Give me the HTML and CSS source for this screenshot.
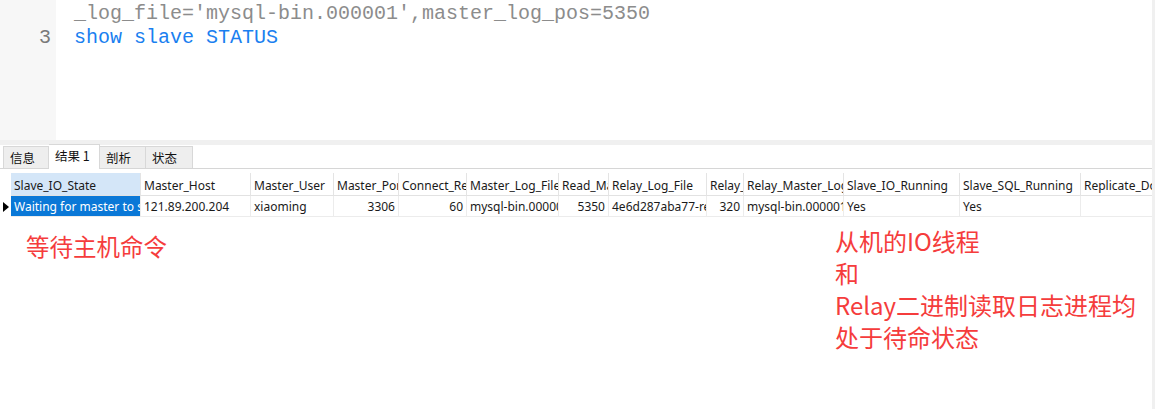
FILE: index.html
```html
<!DOCTYPE html>
<html lang="zh">
<head>
<meta charset="utf-8">
<title>show slave STATUS</title>
<link rel="stylesheet" href="styles.css">
</head>
<body>
<div class="page">
  <div class="main">
    <div class="editor">
      <div class="gutter">
        <div class="ln"></div>
        <div class="ln">3</div>
      </div>
      <div class="code">
        <div class="line gray">_log_file='mysql-bin.000001',master_log_pos=5350</div>
        <div class="line blue">show slave STATUS</div>
      </div>
    </div>
    <div class="band"></div>
    <div class="tabs">
      <div class="tab">信息</div>
      <div class="tab active">结果 1</div>
      <div class="tab">剖析</div>
      <div class="tab">状态</div>
    </div>
    <div class="grid">
      <div class="ind"></div>
      <div class="hc sel">Slave_IO_State</div>
      <div class="hc">Master_Host</div>
      <div class="hc">Master_User</div>
      <div class="hc">Master_Port</div>
      <div class="hc">Connect_Retry</div>
      <div class="hc">Master_Log_File</div>
      <div class="hc">Read_Master_Log_Pos</div>
      <div class="hc">Relay_Log_File</div>
      <div class="hc">Relay_Log_Pos</div>
      <div class="hc">Relay_Master_Log_File</div>
      <div class="hc">Slave_IO_Running</div>
      <div class="hc">Slave_SQL_Running</div>
      <div class="hc">Replicate_Do_DB</div>

      <div class="ind"><span class="tri"></span></div>
      <div class="dc cur">Waiting for master to send event</div>
      <div class="dc">121.89.200.204</div>
      <div class="dc">xiaoming</div>
      <div class="dc num">3306</div>
      <div class="dc num">60</div>
      <div class="dc">mysql-bin.000001</div>
      <div class="dc num">5350</div>
      <div class="dc">4e6d287aba77-relay-bin.000002</div>
      <div class="dc num">320</div>
      <div class="dc">mysql-bin.000001</div>
      <div class="dc">Yes</div>
      <div class="dc">Yes</div>
      <div class="dc"></div>
    </div>
    <div class="notes">
      <div class="note left">等待主机命令</div>
      <div class="note right">
        <div>从机的IO线程</div>
        <div>和</div>
        <div>Relay二进制读取日志进程均</div>
        <div>处于待命状态</div>
      </div>
    </div>
  </div>
  <div class="scroll"></div>
</div>
</body>
</html>
```
FILE: styles.css
```css
html, body {
  margin: 0;
  padding: 0;
  background: #ffffff;
}
.page {
  display: flex;
  width: 1155px;
  height: 409px;
  overflow: hidden;
}
.main {
  width: 1152px;
  display: flex;
  flex-direction: column;
}
.scroll {
  width: 3px;
  background: #f0f0f0;
}
.editor {
  height: 140px;
  display: flex;
}
.gutter {
  width: 56px;
  background: #f7f7f7;
  box-sizing: border-box;
  padding: 2px 5px 0 0;
  text-align: right;
  font-family: "Liberation Mono", monospace;
  font-size: 20px;
  line-height: 24px;
  color: #7a7a7a;
}
.ln {
  height: 24px;
}
.code {
  flex: 1;
  padding: 2px 0 0 18px;
  font-family: "Liberation Mono", monospace;
  font-size: 20px;
  line-height: 24px;
}
.line {
  white-space: pre;
  height: 24px;
}
.line.gray { color: #8c8c8c; }
.line.blue { color: #1a7ff0; }
.band {
  height: 5px;
  background: #f0f0f0;
}
.tabs {
  height: 23px;
  display: flex;
  align-items: flex-end;
  padding-left: 3px;
  border-bottom: 1px solid #d6d6d6;
  font-family: "Noto Sans CJK SC", sans-serif;
  font-size: 12.5px;
}
.tab {
  height: 21px;
  line-height: 21px;
  box-sizing: content-box;
  background: #eeeeee;
  border: 1px solid #d8d8d8;
  border-bottom: none;
  border-left: none;
  padding: 0 6px;
  color: #111;
}
.tab:first-child {
  border-left: 1px solid #d8d8d8;
  width: 32px;
}
.tab.active {
  height: 24px;
  line-height: 22px;
  background: #ffffff;
  width: 38px;
  margin-bottom: -1px;
}
.tab:nth-child(3) { width: 33px; }
.tab:nth-child(4) { width: 34px; }
.grid {
  margin-top: 4px;
  display: grid;
  grid-template-columns: 11px 129px 110px 83px 65px 68px 92px 50px 98px 37px 100px 116px 121px 72px;
  grid-template-rows: 23px 21px;
  font-family: "Noto Sans", "Noto Sans CJK SC", sans-serif;
  font-size: 12px;
  color: #1a1a1a;
}
.hc, .dc {
  box-sizing: border-box;
  padding: 0 3px;
  white-space: nowrap;
  overflow: hidden;
  text-overflow: clip;
  border-left: 1px solid #e4e4e4;
}
.hc {
  line-height: 22px;
  padding-top: 2px;
  border-bottom: 1px solid #e2e2e2;
}
.hc:nth-child(2) { border-left: none; }
.hc.sel { background: #d4e6f8; }
.dc {
  line-height: 20px;
  padding-top: 1px;
  border-bottom: 1px solid #ececec;
  border-left-color: #ececec;
}
.dc.cur {
  background: #0a78d7;
  color: #ffffff;
  border-left: none;
}
.dc.num { text-align: right; }
.ind {
  display: flex;
  align-items: center;
  justify-content: flex-start;
  padding-left: 3px;
}
.tri {
  width: 0;
  height: 0;
  border-top: 5px solid transparent;
  border-bottom: 5px solid transparent;
  border-left: 6px solid #000;
}
.notes {
  display: grid;
  grid-template-columns: 835px 1fr;
  font-family: "Noto Sans CJK SC", sans-serif;
  line-height: 32px;
  color: #f53c3c;
}
.note.left {
  font-size: 23.5px;
  padding: 13px 0 0 26px;
}
.note.right {
  font-size: 24px;
  padding-top: 8px;
}
```
